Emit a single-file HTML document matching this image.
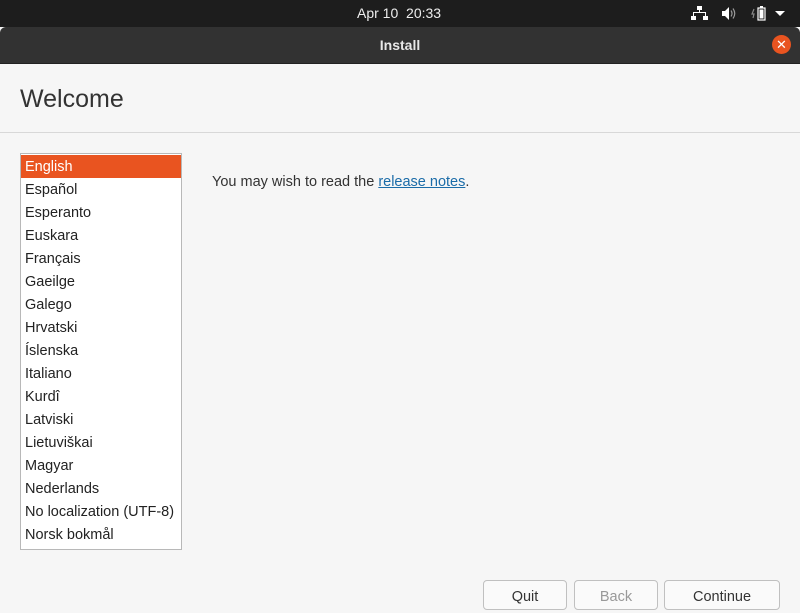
<!DOCTYPE html>
<html><head><style>
*{margin:0;padding:0;box-sizing:border-box}
body{width:800px;height:600px;overflow:hidden;background:#f6f6f6;font-family:"Liberation Sans",sans-serif;position:relative}
#top{position:absolute;left:0;top:0;width:800px;height:27px;background:#1d1d1d;color:#eee;font-size:14px}
#title{position:absolute;left:0;top:27px;width:800px;height:37px;background:#323232;border-radius:6px 6px 0 0;color:#e8e8e8;font-weight:bold;font-size:14px;text-align:center;line-height:37px;border-bottom:1px solid #222}
#close{position:absolute;left:772px;top:35px;width:19px;height:19px;border-radius:50%;background:#e95420;color:#fff;font-size:13px;line-height:19px;text-align:center}
#hdr{position:absolute;left:0;top:64px;width:800px;height:69px;border-bottom:1px solid #d8d8d8}
#hdr span{position:absolute;left:20px;top:21px;font-size:25px;color:#333}
#list{position:absolute;left:20px;top:153px;width:162px;height:397px;background:#fff;border:1px solid #b8b8b8;padding-top:1px}
#list div{height:23px;line-height:24px;padding-left:4px;font-size:14.5px;color:#222}
#list .sel{background:#e95420;color:#fff}
#msg{position:absolute;left:212px;top:174px;font-size:14.5px;color:#333}
#msg a{color:#1b6ca8;text-decoration:underline}
.btn{position:absolute;top:580px;height:30px;border:1px solid #c0c0c0;border-radius:4px;background:#fafafa;font-size:14.5px;text-align:center;line-height:32px;color:#333}
</style></head><body>
<div id="top"><span style="position:absolute;left:357px;top:5px">Apr 10&nbsp; 20:33</span>
<svg style="position:absolute;left:691px;top:6px" width="18" height="15" viewBox="0 0 18 15" fill="#fff"><rect x="6" y="0" width="5" height="4"/><rect x="8" y="4" width="1" height="3"/><rect x="2" y="6" width="13" height="1"/><rect x="2" y="6" width="1" height="4"/><rect x="14" y="6" width="1" height="4"/><rect x="0" y="10" width="5" height="4"/><rect x="12" y="10" width="5" height="4"/></svg>
<svg style="position:absolute;left:721px;top:6px" width="16" height="15" viewBox="0 0 16 15"><path d="M1 5h3l4-4v13l-4-4H1z" fill="#fff"/><path d="M10 4.5q2 3 0 6M12 2.5q3.5 5 0 10" stroke="#999" fill="none" stroke-width="1.2"/></svg>
<svg style="position:absolute;left:750px;top:4px" width="18" height="18" viewBox="0 0 18 18"><path d="M4 5l-2 5h2l-1 4" stroke="#888" fill="none" stroke-width="1.2"/><rect x="8" y="4" width="7" height="12" fill="none" stroke="#fff" stroke-width="1.2"/><rect x="10" y="2" width="3" height="2" fill="#fff"/><rect x="9.5" y="5.5" width="4" height="9" fill="#fff"/></svg>
<svg style="position:absolute;left:775px;top:11px" width="10" height="6"><path d="M0 0h10L5 5z" fill="#fff"/></svg>
</div>
<div id="title">Install</div>
<div id="close">✕</div>
<div id="hdr"><span>Welcome</span></div>
<div id="list">
<div class="sel">English</div><div>Español</div><div>Esperanto</div><div>Euskara</div><div>Français</div><div>Gaeilge</div><div>Galego</div><div>Hrvatski</div><div>Íslenska</div><div>Italiano</div><div>Kurdî</div><div>Latviski</div><div>Lietuviškai</div><div>Magyar</div><div>Nederlands</div><div>No localization (UTF-8)</div><div>Norsk bokmål</div>
</div>
<div id="msg">You may wish to read the <a>release notes</a>.</div>
<div class="btn" style="left:483px;width:84px">Quit</div>
<div class="btn" style="left:574px;width:84px;color:#999">Back</div>
<div class="btn" style="left:664px;width:116px">Continue</div>
</body></html>
